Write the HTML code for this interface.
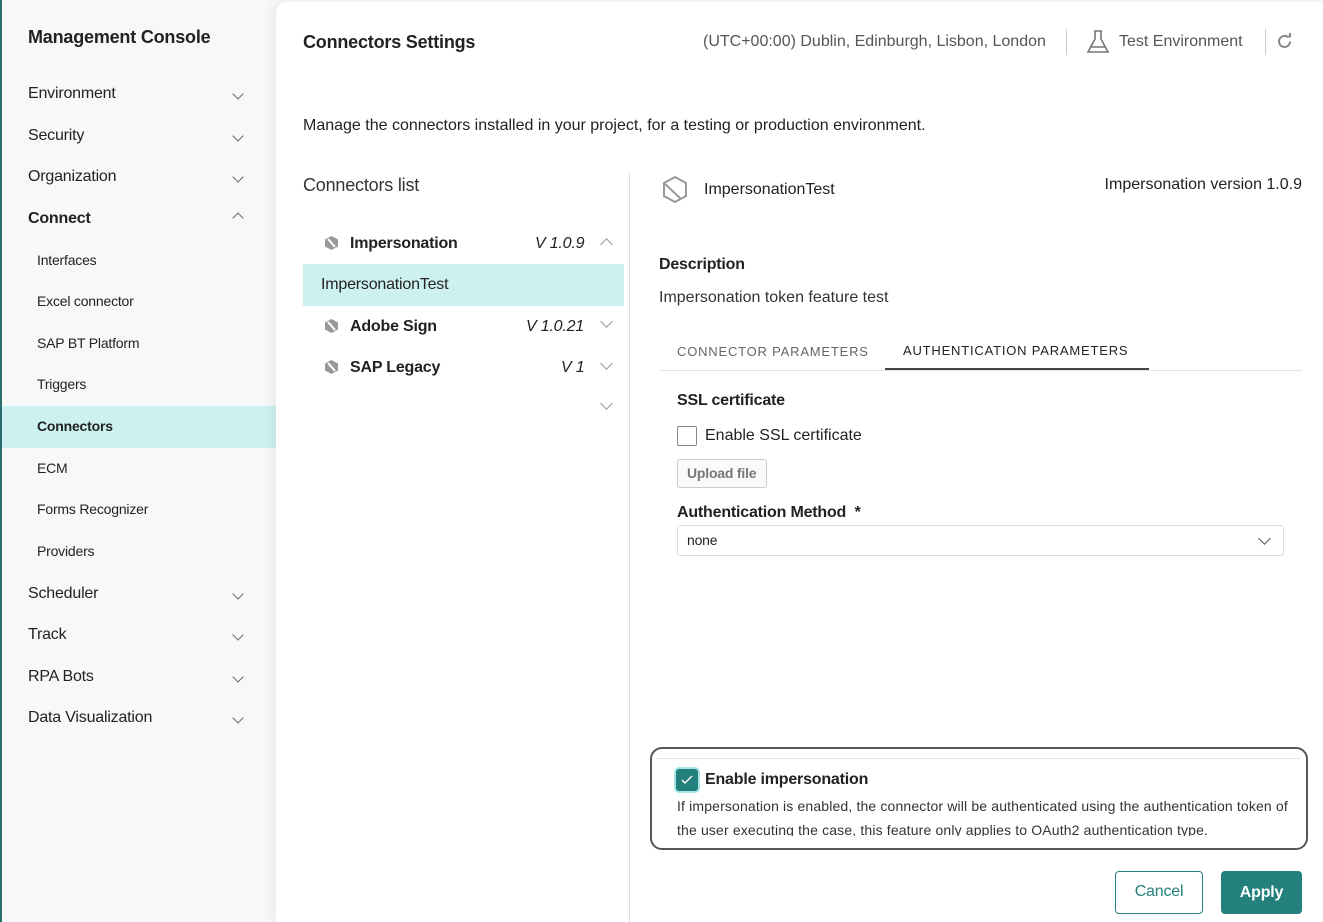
<!DOCTYPE html>
<html><head><meta charset="utf-8"><style>
*{box-sizing:border-box;margin:0;padding:0}
body{width:1323px;height:922px;overflow:hidden;background:#f7f7f7;font-family:"Liberation Sans",sans-serif;color:#222;position:relative;letter-spacing:-0.2px}
.side{position:absolute;left:0;top:0;width:276px;height:922px;background:#f8f8f8;border-left:2px solid #2a6f6e}
.abs{position:absolute;white-space:nowrap}
.h{font-size:18px;font-weight:bold;color:#222}
.n{font-size:16px;color:#222;left:26px}
.s{font-size:14px;color:#222;left:35px}
.chev{position:absolute;left:232px;width:8px;height:8px;border-right:1.6px solid #666;border-bottom:1.6px solid #666;transform:rotate(45deg)}
.chev.up{transform:rotate(-135deg)}
.main{position:absolute;left:276px;top:2px;width:1047px;height:920px;background:#fff;border-radius:10px 0 0 0;box-shadow:-4px 0 12px rgba(0,0,0,.06)}
.thin{position:absolute;width:9px;height:9px;border-right:1px solid #999;border-bottom:1px solid #999;transform:rotate(45deg)}
.thin.up{transform:rotate(-135deg)}
.hex{position:absolute}
</style></head><body>
<div class="side">
<div class="abs h" style="left:26px;top:27px">Management Console</div>
<div class="abs n" style="top:85px">Environment</div><div class="chev" style="top:90px"></div>
<div class="abs n" style="top:127px">Security</div><div class="chev" style="top:132px"></div>
<div class="abs n" style="top:168px">Organization</div><div class="chev" style="top:173px"></div>
<div class="abs n" style="top:210px;font-weight:bold">Connect</div><div class="chev up" style="top:214px"></div>
<div class="abs s" style="top:252px">Interfaces</div>
<div class="abs s" style="top:293px">Excel connector</div>
<div class="abs s" style="top:335px">SAP BT Platform</div>
<div class="abs s" style="top:376px">Triggers</div>
<div style="position:absolute;left:0;top:406px;width:274px;height:42px;background:#cdf0f0"></div>
<div class="abs s" style="top:418px;font-weight:bold">Connectors</div>
<div class="abs s" style="top:460px">ECM</div>
<div class="abs s" style="top:501px">Forms Recognizer</div>
<div class="abs s" style="top:543px">Providers</div>
<div class="abs n" style="top:585px">Scheduler</div><div class="chev" style="top:590px"></div>
<div class="abs n" style="top:626px">Track</div><div class="chev" style="top:631px"></div>
<div class="abs n" style="top:668px">RPA Bots</div><div class="chev" style="top:673px"></div>
<div class="abs n" style="top:709px">Data Visualization</div><div class="chev" style="top:714px"></div>
</div>
<div class="main"></div>
<div class="abs h" style="left:303px;top:32px">Connectors Settings</div>
<div class="abs" style="left:703px;top:33px;font-size:16px;color:#555;letter-spacing:0">(UTC+00:00) Dublin, Edinburgh, Lisbon, London</div>
<div style="position:absolute;left:1066px;top:29px;width:1px;height:26px;background:#ccc"></div>
<svg class="hex" style="left:1086px;top:29px" width="24" height="26" viewBox="0 0 24 26" fill="none" stroke="#777" stroke-width="1.6"><path d="M8 2h8M9 2v8L2 23h20L15 10V2M5 18h14"/></svg>
<div class="abs" style="left:1119px;top:33px;font-size:16px;color:#555;letter-spacing:0">Test Environment</div>
<div style="position:absolute;left:1265px;top:29px;width:1px;height:26px;background:#ccc"></div>
<svg class="hex" style="left:1276px;top:33px" width="17" height="17" viewBox="0 0 17 17" fill="none" stroke="#888" stroke-width="2"><path d="M14 8.5A5.5 5.5 0 1 1 12 4.2"/><path d="M10 3.5h4V0" /></svg>
<div class="abs" style="left:303px;top:117px;font-size:16px;letter-spacing:0">Manage the connectors installed in your project, for a testing or production environment.</div>
<div class="abs" style="left:303px;top:175px;font-size:18px;color:#333">Connectors list</div>
<div style="position:absolute;left:629px;top:173px;width:1px;height:749px;background:#ddd"></div>
<svg class="hex" style="left:324px;top:235px" width="15" height="16" viewBox="0 0 15 16"><path d="M7.5 1L14 4.5v7L7.5 15 1 11.5v-7z" fill="#999"/><path d="M4 4l7 8" stroke="#fff" stroke-width="2"/></svg>
<div class="abs" style="left:350px;top:235px;font-size:16px;font-weight:bold">Impersonation</div>
<div class="abs" style="left:535px;top:235px;font-size:16px;font-style:italic">V 1.0.9</div>
<div class="thin up" style="left:602px;top:240px"></div>
<div style="position:absolute;left:303px;top:264px;width:321px;height:42px;background:#cdf0f0"></div>
<div class="abs" style="left:321px;top:276px;font-size:16px">ImpersonationTest</div>
<svg class="hex" style="left:324px;top:318px" width="15" height="16" viewBox="0 0 15 16"><path d="M7.5 1L14 4.5v7L7.5 15 1 11.5v-7z" fill="#999"/><path d="M4 4l7 8" stroke="#fff" stroke-width="2"/></svg>
<div class="abs" style="left:350px;top:318px;font-size:16px;font-weight:bold">Adobe Sign</div>
<div class="abs" style="left:526px;top:318px;font-size:16px;font-style:italic">V 1.0.21</div>
<div class="thin" style="left:602px;top:317px"></div>
<svg class="hex" style="left:324px;top:359px" width="15" height="16" viewBox="0 0 15 16"><path d="M7.5 1L14 4.5v7L7.5 15 1 11.5v-7z" fill="#999"/><path d="M4 4l7 8" stroke="#fff" stroke-width="2"/></svg>
<div class="abs" style="left:350px;top:359px;font-size:16px;font-weight:bold">SAP Legacy</div>
<div class="abs" style="left:561px;top:359px;font-size:16px;font-style:italic">V 1</div>
<div class="thin" style="left:602px;top:359px"></div>
<div class="thin" style="left:602px;top:399px"></div>
<svg class="hex" style="left:662px;top:175px" width="26" height="29" viewBox="0 0 26 29" fill="none" stroke="#999" stroke-width="2"><path d="M13 2L24 8v13l-11 6L2 21V8z"/><path d="M2 8l17 16"/></svg>
<div class="abs" style="left:704px;top:181px;font-size:16px;letter-spacing:0">ImpersonationTest</div>
<div class="abs" style="right:21px;top:176px;font-size:16px;letter-spacing:0">Impersonation version 1.0.9</div>
<div class="abs" style="left:659px;top:256px;font-size:16px;font-weight:bold">Description</div>
<div class="abs" style="left:659px;top:289px;font-size:16px;color:#333;letter-spacing:0">Impersonation token feature test</div>
<div class="abs" style="left:677px;top:344px;font-size:13px;color:#666;letter-spacing:0.8px">CONNECTOR PARAMETERS</div>
<div class="abs" style="left:903px;top:343px;font-size:13px;color:#222;letter-spacing:0.8px">AUTHENTICATION PARAMETERS</div>
<div style="position:absolute;left:659px;top:370px;width:643px;height:1px;background:#e2e2e2"></div>
<div style="position:absolute;left:885px;top:368px;width:264px;height:2px;background:#444"></div>
<div class="abs" style="left:677px;top:392px;font-size:16px;font-weight:bold">SSL certificate</div>
<div style="position:absolute;left:677px;top:426px;width:20px;height:20px;border:1.5px solid #888;border-radius:2px"></div>
<div class="abs" style="left:705px;top:427px;font-size:16px;letter-spacing:0">Enable SSL certificate</div>
<div style="position:absolute;left:677px;top:459px;width:90px;height:29px;border:1px solid #ccc;border-radius:3px;background:#fafafa"></div>
<div class="abs" style="left:687px;top:465px;font-size:14px;font-weight:bold;color:#777">Upload file</div>
<div class="abs" style="left:677px;top:504px;font-size:16px;font-weight:bold">Authentication Method &nbsp;*</div>
<div style="position:absolute;left:677px;top:525px;width:607px;height:31px;border:1px solid #ddd;border-radius:3px"></div>
<div class="abs" style="left:687px;top:532px;font-size:14px">none</div>
<div class="thin" style="left:1260px;top:534px;border-color:#555"></div>
<div style="position:absolute;left:650px;top:747px;width:658px;height:103px;border:2.5px solid #555;border-radius:12px"></div>
<div style="position:absolute;left:657px;top:758px;width:643px;height:1px;background:#e2e2e2"></div>
<div style="position:absolute;left:676px;top:769px;width:22px;height:22px;background:#23807c;border-radius:3px;box-shadow:0 0 0 2px #a8e6e6"></div>
<svg class="hex" style="left:680px;top:773px" width="14" height="14" viewBox="0 0 14 14" fill="none" stroke="#fff" stroke-width="1.4"><path d="M2 7l3 3 7-7"/></svg>
<div class="abs" style="left:705px;top:771px;font-size:16px;font-weight:bold">Enable impersonation</div>
<div class="abs" style="left:677px;top:794px;font-size:14px;color:#333;line-height:24px;white-space:normal;width:622px;height:42px;overflow:hidden;letter-spacing:0.15px">If impersonation is enabled, the connector will be authenticated using the authentication token of the user executing the case, this feature only applies to OAuth2 authentication type.</div>
<div style="position:absolute;left:1115px;top:871px;width:88px;height:43px;border:1.5px solid #23807c;border-radius:4px;color:#23807c;font-size:16px;text-align:center;line-height:40px">Cancel</div>
<div style="position:absolute;left:1221px;top:871px;width:81px;height:43px;background:#23807c;border-radius:4px;color:#fff;font-size:16px;font-weight:bold;text-align:center;line-height:43px">Apply</div>
</body></html>
